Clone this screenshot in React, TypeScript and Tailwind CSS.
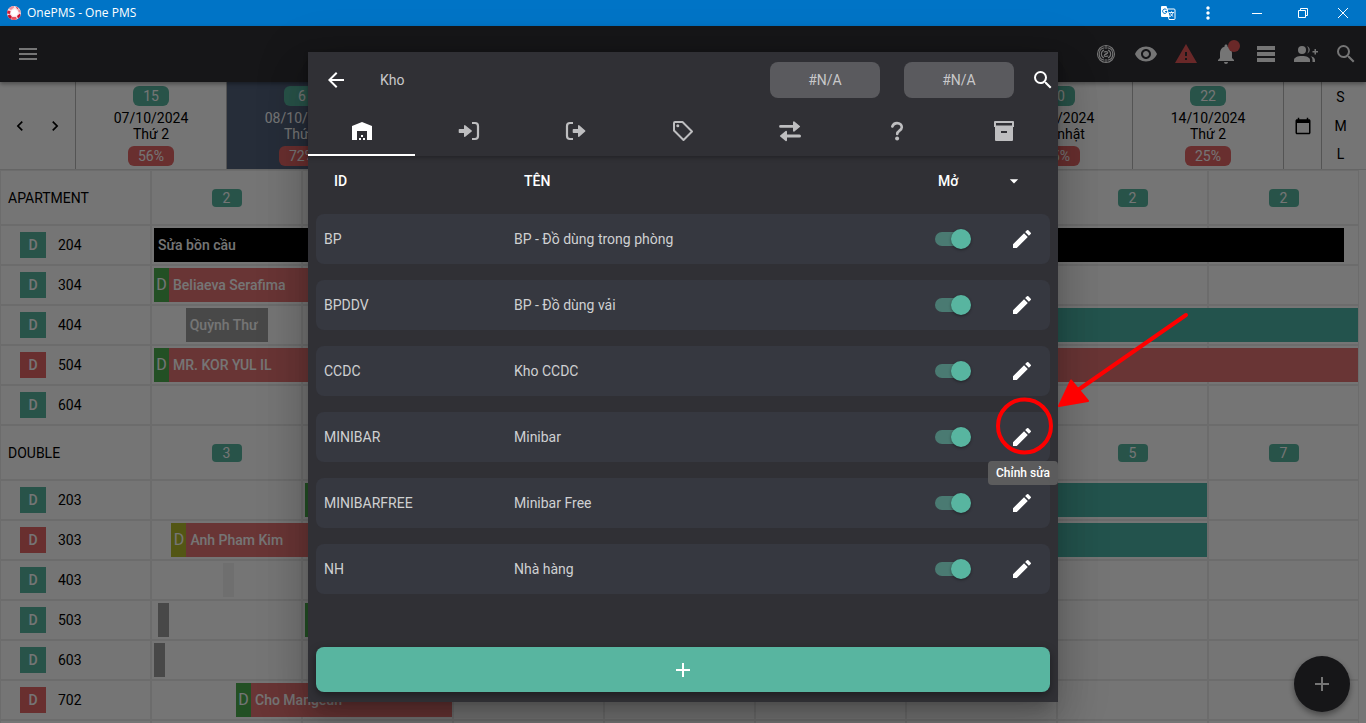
import { useState } from 'react';
import type { ReactNode } from 'react';
import {
  MdAdd,
  MdArrowBack,
  MdArrowDropDown,
  MdCalendarToday,
  MdChevronLeft,
  MdChevronRight,
  MdEdit,
  MdMenu,
  MdMoreVert,
  MdNotifications,
  MdSearch,
  MdVisibility,
  MdWarning,
  MdWarehouse,
} from 'react-icons/md';

type BarTone = 'black' | 'red' | 'grey' | 'teal' | 'faint';

interface Bar {
  // both in days from the first visible day
  start: number;
  end: number;
  tone: BarTone;
  label?: string;
  flag?: 'green' | 'olive';
}

interface Room {
  name: string;
  clean: boolean;
  bars: Bar[];
}

interface RoomGroup {
  name: string;
  free: number[];
  rooms: Room[];
}

const DAYS = [
  { free: 15, date: '07/10/2024', name: 'Thứ 2', load: '56%' },
  { free: 6, date: '08/10/2024', name: 'Thứ 3', load: '72%', today: true },
  { free: 8, date: '09/10/2024', name: 'Thứ 4', load: '68%' },
  { free: 9, date: '10/10/2024', name: 'Thứ 5', load: '64%' },
  { free: 9, date: '11/10/2024', name: 'Thứ 6', load: '60%' },
  { free: 10, date: '12/10/2024', name: 'Thứ 7', load: '55%' },
  { free: 20, date: '13/10/2024', name: 'Chủ nhật', load: '35%' },
  { free: 22, date: '14/10/2024', name: 'Thứ 2', load: '25%' },
];

const GROUPS: RoomGroup[] = [
  {
    name: 'APARTMENT',
    free: [2, 2, 2, 2, 2, 2, 2, 2],
    rooms: [
      { name: '204', clean: true, bars: [{ start: 0.02, end: 7.9, tone: 'black', label: 'Sửa bồn cầu' }] },
      { name: '304', clean: true, bars: [{ start: 0.02, end: 4, tone: 'red', label: 'Beliaeva Serafima', flag: 'green' }] },
      {
        name: '404',
        clean: true,
        bars: [
          { start: 0.23, end: 0.775, tone: 'grey', label: 'Quỳnh Thư' },
          { start: 4, end: 7.995, tone: 'teal' },
        ],
      },
      { name: '504', clean: false, bars: [{ start: 0.02, end: 7.995, tone: 'red', label: 'MR. KOR YUL IL', flag: 'green' }] },
      { name: '604', clean: true, bars: [] },
    ],
  },
  {
    name: 'DOUBLE',
    free: [3, 3, 3, 4, 4, 4, 5, 7],
    rooms: [
      {
        name: '203',
        clean: true,
        bars: [
          { start: 1.02, end: 3, tone: 'red', flag: 'green' },
          { start: 4, end: 6.995, tone: 'teal' },
        ],
      },
      {
        name: '303',
        clean: false,
        bars: [
          { start: 0.135, end: 2, tone: 'red', label: 'Anh Pham Kim', flag: 'olive' },
          { start: 4, end: 6.995, tone: 'teal' },
        ],
      },
      { name: '403', clean: true, bars: [{ start: 0.48, end: 0.55, tone: 'faint' }] },
      {
        name: '503',
        clean: true,
        bars: [
          { start: 0.045, end: 0.12, tone: 'grey' },
          { start: 1.02, end: 3, tone: 'red', flag: 'green' },
        ],
      },
      { name: '603', clean: true, bars: [{ start: 0.02, end: 0.095, tone: 'grey' }] },
      { name: '702', clean: false, bars: [{ start: 0.563, end: 1.993, tone: 'red', label: 'Cho Mangeun', flag: 'green' }] },
      { name: '703', clean: true, bars: [] },
    ],
  },
];

const STORES = [
  { id: 'BP', name: 'BP - Đồ dùng trong phòng' },
  { id: 'BPDDV', name: 'BP - Đồ dùng vải' },
  { id: 'CCDC', name: 'Kho CCDC' },
  { id: 'MINIBAR', name: 'Minibar' },
  { id: 'MINIBARFREE', name: 'Minibar Free' },
  { id: 'NH', name: 'Nhà hàng' },
];

const BAR_TONES: Record<BarTone, string> = {
  black: 'bg-black',
  red: 'bg-[#e57373]',
  grey: 'bg-[#9e9e9e]',
  teal: 'bg-[#4db6a8]',
  faint: 'bg-[#f2f2f2]',
};

function AppLogo() {
  return (
    <svg viewBox="0 0 16 16" className="size-4">
      <circle cx="8" cy="8" r="7" fill="#fbdfe2" />
      <path d="M8 1a7 7 0 0 0-5.5 2.7L5 5l3-2.500z" fill="#ee8f9a" />
      <path d="M1.500 5.500 4.500 6 4 9l-3-.5z" fill="#d6213a" />
      <path d="M1.500 10.500 4 9.500 6 12l-1.500 2A7 7 0 0 1 1.500 10.500z" fill="#c8102e" />
      <path d="M6 12h4l1 2.300a7 7 0 0 1-6 0z" fill="#e8505f" />
      <path d="M11 11l3-2.500.5 2a7 7 0 0 1-2.500 3z" fill="#c8102e" />
      <path d="M12 4l2 1 .8 3L12.500 7z" fill="#f08a95" />
      <path d="M5.500 5.500 9 4l3 2.500L11 10.500 7 11 4.800 8.500z" fill="#fff" />
      <path d="M9.500 1.500 12.500 3 11.500 4.500z" fill="#dd3a4c" />
    </svg>
  );
}

function TranslateIcon() {
  return (
    <svg viewBox="0 0 16 16" className="size-4">
      <path d="M7 4h7a1 1 0 0 1 1 1v8.500a1 1 0 0 1-1 1H9z" fill="#0072c6" stroke="#fff" />
      <path d="M9 7.500h5M11.500 6.300v1.200M13 7.500c-.5 2-1.700 3.300-3 4.200M10.500 8.500c.6 1.300 1.500 2.200 2.700 3" fill="none" stroke="#fff" strokeWidth=".9" />
      <path d="M2 1h4.500L10 12H2a1 1 0 0 1-1-1V2a1 1 0 0 1 1-1z" fill="#fff" />
      <path d="M6.600 4.900A2.200 2.200 0 1 0 7 6.500H5" fill="none" stroke="#0072c6" />
    </svg>
  );
}

function RadarIcon() {
  return (
    <svg viewBox="0 0 20 20" className="size-5" fill="none" stroke="currentColor" strokeWidth="1.100">
      <circle cx="10" cy="10" r="8.500" />
      <path d="M8.500 3.700a6.400 6.400 0 0 0 0 12.600M11.500 3.700a6.400 6.400 0 0 1 0 12.600" />
      <path d="M8 5.900a4.500 4.500 0 0 0 0 8.200M12 5.900a4.500 4.500 0 0 1 0 8.200M10 1.500v3.500M10 15v3.500" />
      <path d="M8.200 8.500c0-1.400 3.600-1.400 3.600.2 0 1.500-3.600 1-3.600 2.700 0 1.500 3.600 1.500 3.600 0M10 8.500v3" />
    </svg>
  );
}

function RowsIcon() {
  return (
    <svg viewBox="0 0 24 24" className="size-6" fill="currentColor">
      <path d="M3 4h18v4H3zM3 10h18v4H3zM3 16h18v4H3z" />
    </svg>
  );
}

function AddPeopleIcon() {
  return (
    <svg viewBox="0 0 24 24" className="size-6" fill="currentColor">
      <path d="M19 17v2H1v-2s0-4 7-4 7 4 7 4v2H1v-2M12 8a4 4 0 1 0-8 0 4 4 0 0 0 8 0" className="hidden" />
      <path d="M24 9h-2V7h-1.500v2h-2v1.500h2v2H22v-2h2z" />
      <circle cx="8" cy="8" r="4" />
      <path d="M0 20v-2c0-2.500 3.500-4 8-4s8 1.500 8 4v2z" />
      <path d="M13 4.200a4 4 0 0 1 0 7.600c2-2.200 2-5.400 0-7.600zM16.500 14.200c1.500.9 2 2.200 2 3.800v2h2.500v-2c0-2-1.800-3.200-4.500-3.800z" />
    </svg>
  );
}

function SignInIcon({ out }: { out?: boolean }) {
  return (
    <svg viewBox="0 0 24 24" className="size-6" fill="none" stroke="currentColor">
      {out ? (
        <>
          <path d="M9 4H6a3 3 0 0 0-3 3v10a3 3 0 0 0 3 3h3" strokeWidth="2.200" />
          <path d="M9.500 10H14V6.800a.7.700 0 0 1 1.200-.5l6 5.200a.7.700 0 0 1 0 1l-6 5.200a.7.700 0 0 1-1.200-.5V14H9.500a.8.800 0 0 1-.8-.8v-2.400a.8.800 0 0 1 .8-.8z" fill="currentColor" stroke="none" />
        </>
      ) : (
        <>
          <path d="M15 4h3a3 3 0 0 1 3 3v10a3 3 0 0 1-3 3h-3" strokeWidth="2.200" />
          <path d="M2.500 10H7V6.800a.7.700 0 0 1 1.200-.5l6.500 5.200a.7.700 0 0 1 0 1l-6.500 5.200a.7.700 0 0 1-1.200-.5V14H2.500a.8.800 0 0 1-.8-.8v-2.400a.8.800 0 0 1 .8-.8z" fill="currentColor" stroke="none" />
        </>
      )}
    </svg>
  );
}

function TagIcon() {
  return (
    <svg viewBox="0 0 24 24" className="size-6" fill="none" stroke="currentColor" strokeWidth="2">
      <path d="M3 4v7.500l9.500 9.500 8.500-8.500L11.500 3H4a1 1 0 0 0-1 1z" strokeLinejoin="round" />
      <circle cx="6.800" cy="6.800" r="1.500" fill="currentColor" stroke="none" />
    </svg>
  );
}

function SwapIcon() {
  return (
    <svg viewBox="0 0 24 24" className="size-6" fill="currentColor">
      <path d="M2.500 6H15V3.200a.8.800 0 0 1 1.400-.6l5.400 4.300a.8.800 0 0 1 0 1.200l-5.400 4.300a.8.800 0 0 1-1.400-.6V8.800H2.500a1.400 1.400 0 0 1 0-2.800z" />
      <path d="M21.500 15.500H9v-2.800a.8.800 0 0 0-1.400-.6l-5.400 4.300a.8.800 0 0 0 0 1.200l5.400 4.300a.8.800 0 0 0 1.400-.6v-2.800h12.500a1.400 1.400 0 0 0 0-3z" />
    </svg>
  );
}

function QuestionIcon() {
  return (
    <svg viewBox="0 0 24 24" className="size-6" fill="none" stroke="currentColor" strokeWidth="2.600" strokeLinecap="round">
      <path d="M7.300 7.500c.8-2.300 2.500-3.400 4.700-3.400 2.800 0 4.800 1.800 4.800 4.200 0 3.400-4.600 3.300-4.600 6.700" />
      <circle cx="12.100" cy="19.500" r="2" fill="currentColor" stroke="none" />
    </svg>
  );
}

function ArchiveIcon() {
  return (
    <svg viewBox="0 0 24 24" className="size-6" fill="currentColor">
      <path fillRule="evenodd" d="M3 2h18a1 1 0 0 1 1 1v5H2V3a1 1 0 0 1 1-1zm1 2v2.500h16V4z" />
      <path fillRule="evenodd" d="M3 8h18v13a1 1 0 0 1-1 1H4a1 1 0 0 1-1-1zm6 4v2h6v-2z" />
    </svg>
  );
}

const TABS: { label: string; icon: ReactNode }[] = [
  { label: 'Kho', icon: <MdWarehouse className="size-6" /> },
  { label: 'Nhập kho', icon: <SignInIcon /> },
  { label: 'Xuất kho', icon: <SignInIcon out /> },
  { label: 'Giá', icon: <TagIcon /> },
  { label: 'Chuyển kho', icon: <SwapIcon /> },
  { label: 'Kiểm kho', icon: <QuestionIcon /> },
  { label: 'Tồn kho', icon: <ArchiveIcon /> },
];

function TitleBar() {
  return (
    <header className="flex h-[26px] shrink-0 items-center bg-[#0074c6] text-white">
      <div className="flex flex-1 items-center gap-[5px] pl-1.5">
        <AppLogo />
        <span className="font-['Open_Sans',sans-serif] text-xs">OnePMS - One PMS</span>
      </div>
      <button aria-label="Translate" className="flex w-10 justify-center"><TranslateIcon /></button>
      <button aria-label="Menu" className="flex w-10 justify-center"><MdMoreVert className="size-5" /></button>
      <button aria-label="Minimize" className="flex w-[46px] justify-center pl-3">
        <svg viewBox="0 0 10 10" className="size-2.5" stroke="currentColor"><path d="M0 5.500h10" /></svg>
      </button>
      <button aria-label="Restore" className="flex w-[46px] justify-center pl-3">
        <svg viewBox="0 0 10 10" className="size-2.5" fill="none" stroke="currentColor"><path d="M.5 2.500h7v7h-7zM2.500 2.500v-2h7v7h-2" /></svg>
      </button>
      <button aria-label="Close" className="flex w-[46px] justify-center">
        <svg viewBox="0 0 10 10" className="size-2.5" stroke="currentColor"><path d="M0 0l10 10M10 0L0 10" /></svg>
      </button>
    </header>
  );
}

function AppBar() {
  return (
    <div className="relative flex h-14 shrink-0 items-center justify-between bg-[#303036] px-4 text-white shadow-[0_2px_4px_rgba(0,0,0,0.35)]">
      <button aria-label="Menu"><MdMenu className="size-6" /></button>
      <div className="flex gap-4 pr-[-8px] -mr-2">
        <button aria-label="Radar" className="flex size-6 items-center justify-center"><RadarIcon /></button>
        <button aria-label="View"><MdVisibility className="size-6" /></button>
        <button aria-label="Warnings" className="text-[#e55757]"><MdWarning className="size-6" /></button>
        <button aria-label="Notifications" className="relative">
          <MdNotifications className="size-6" />
          <span className="absolute -top-0.5 -right-0.5 size-3 rounded-full bg-[#e55757]" />
        </button>
        <button aria-label="Rows"><RowsIcon /></button>
        <button aria-label="Guests"><AddPeopleIcon /></button>
        <button aria-label="Search"><MdSearch className="size-6" /></button>
      </div>
    </div>
  );
}

function DayHeader() {
  return (
    <div className="flex h-[88px] shrink-0 border-b border-[#dcdcdc] pr-[7px] text-sm leading-4">
      <div className="flex w-[75px] shrink-0 items-center justify-between px-2.5">
        <button aria-label="Previous"><MdChevronLeft className="size-5" /></button>
        <button aria-label="Next"><MdChevronRight className="size-5" /></button>
      </div>
      {DAYS.map((day) => (
        <div
          key={day.date}
          className={`flex flex-1 flex-col items-center border-l border-[#b8b8b8] pt-1 ${day.today ? 'bg-[#53627d] text-white' : ''}`}
        >
          <span className="w-9 rounded-md bg-[#58b5a0] text-center leading-5 text-white">{day.free}</span>
          <span className="pt-1">{day.date}</span>
          <span>{day.name}</span>
          <span className="mt-1 w-[46px] rounded-md bg-[#e56767] text-center leading-5 text-white">{day.load}</span>
        </div>
      ))}
      <button aria-label="Calendar" className="flex w-[38px] items-center justify-center border-l border-[#b8b8b8]">
        <MdCalendarToday className="size-[18px]" />
      </button>
      <div className="flex w-[38px] flex-col items-center justify-between border-l border-[#b8b8b8] py-[7px]">
        <button>S</button>
        <button>M</button>
        <button>L</button>
      </div>
    </div>
  );
}

function Booking({ bar }: { bar: Bar }) {
  return (
    <div
      className={`absolute top-[3px] flex h-[34px] items-center overflow-hidden whitespace-nowrap text-white ${BAR_TONES[bar.tone]}`}
      style={{ left: `${(bar.start / 8) * 100}%`, width: `${((bar.end - bar.start) / 8) * 100}%` }}
    >
      {bar.flag && (
        <span className={`flex h-full w-[15px] shrink-0 items-center justify-center text-base ${bar.flag === 'green' ? 'bg-[#4caf50]' : 'bg-[#b5bb2c]'}`}>
          D
        </span>
      )}
      {bar.label && <span className="pl-1 font-medium">{bar.label}</span>}
    </div>
  );
}

function Timeline() {
  return (
    <div className="flex-1 overflow-hidden pr-[7px] text-sm">
      {GROUPS.map((group) => (
        <div key={group.name}>
          <div className="grid h-[55px] grid-cols-9">
            <div className="flex items-center border border-[#ececec] pl-[7px]">{group.name}</div>
            {group.free.map((count, i) => (
              <div key={i} className="flex items-center justify-center border border-[#ececec]">
                <span className="w-[30px] rounded bg-[#58b5a0] text-center leading-[18px] text-white">{count}</span>
              </div>
            ))}
          </div>
          {group.rooms.map((room) => (
            <div key={room.name} className="grid h-10 grid-cols-9">
              <div className="flex items-center gap-3 border border-[#ececec] pl-[19px]">
                <span className={`w-[26px] text-center leading-[26px] font-medium text-white ${room.clean ? 'bg-[#58b5a0]' : 'bg-[#e56767]'}`}>D</span>
                {room.name}
              </div>
              <div className="relative col-span-8 grid grid-cols-8">
                {DAYS.map((day) => (
                  <div key={day.date} className="border border-[#ececec]" />
                ))}
                {room.bars.map((bar) => (
                  <Booking key={bar.start} bar={bar} />
                ))}
              </div>
            </div>
          ))}
        </div>
      ))}
    </div>
  );
}

function Toggle({ label, checked, onChange }: { label: string; checked: boolean; onChange: () => void }) {
  return (
    <label className="relative flex h-5 w-9 cursor-pointer items-center">
      <input type="checkbox" aria-label={label} checked={checked} onChange={onChange} className="peer sr-only" />
      <span className="h-3.5 w-[34px] rounded-full bg-white/30 peer-checked:bg-[#4a7a72]" />
      <span className="absolute left-0 size-5 rounded-full bg-gray-300 shadow-[0_1px_3px_rgba(0,0,0,0.4)] peer-checked:left-4 peer-checked:bg-[#58b5a0]" />
    </label>
  );
}

function StoreDialog() {
  const [tab, setTab] = useState(0);
  const [closed, setClosed] = useState<string[]>([]);

  const toggle = (id: string) =>
    setClosed((prev) => (prev.includes(id) ? prev.filter((x) => x !== id) : [...prev, id]));

  return (
    <div
      role="dialog"
      aria-label="Kho"
      className="relative flex w-full max-w-[750px] flex-col bg-[#303035] text-sm text-white shadow-[0_11px_15px_-7px_rgba(0,0,0,0.2),0_24px_38px_3px_rgba(0,0,0,0.14),0_9px_46px_8px_rgba(0,0,0,0.12)]"
    >
      <div className="shadow-[0_2px_4px_rgba(0,0,0,0.25)]">
        <div className="flex h-14 items-center pl-4 text-[#c8c8ca]">
          <button aria-label="Quay lại" className="text-white"><MdArrowBack className="size-6" /></button>
          <h1 className="flex-1 pl-8">Kho</h1>
          <button className="h-9 w-[110px] rounded-lg bg-[#5a5a5e]">#N/A</button>
          <button className="ml-6 h-9 w-[110px] rounded-lg bg-[#5a5a5e]">#N/A</button>
          <button aria-label="Tìm kiếm" className="pr-[3px] pl-[17px] text-white"><MdSearch className="size-6" /></button>
        </div>
        <div role="tablist" className="grid h-12 grid-cols-7">
          {TABS.map((item, i) => (
            <button
              key={item.label}
              role="tab"
              aria-label={item.label}
              aria-selected={tab === i}
              onClick={() => setTab(i)}
              className={`flex items-center justify-center border-b-2 ${tab === i ? 'border-white text-white' : 'border-transparent text-[#bebec0]'}`}
            >
              {item.icon}
            </button>
          ))}
        </div>
      </div>

      <table className="mx-2 block">
        <thead className="block">
          <tr className="flex h-[50px] items-center px-[18px] text-left">
            <th className="w-[190px] font-medium">ID</th>
            <th className="flex-1 font-medium">TÊN</th>
            <th className="flex w-[94px] items-center justify-between pr-2 font-medium">
              Mở
              <button aria-label="Lọc"><MdArrowDropDown className="size-5" /></button>
            </th>
          </tr>
        </thead>
        <tbody className="flex flex-col gap-4 pt-2">
          {STORES.map((store) => (
            <tr key={store.id} className="flex h-[50px] items-center rounded-lg bg-[#363840] pr-4 pl-2 text-[#cfd0d2]">
              <td className="w-[190px]">{store.id}</td>
              <td className="flex-1">{store.name}</td>
              <td className="w-[75px]">
                <Toggle label={store.name} checked={!closed.includes(store.id)} onChange={() => toggle(store.id)} />
              </td>
              <td className="relative">
                <button aria-label={`Chỉnh sửa ${store.id}`} className="block text-white"><MdEdit className="size-6" /></button>
                {store.id === 'MINIBAR' && (
                  <>
                    <span className="absolute top-9 -right-6 z-10 rounded bg-[#616161]/90 px-2 text-xs leading-6 font-medium whitespace-nowrap text-white">
                      Chỉnh sửa
                    </span>
                    <svg viewBox="0 0 200 150" className="pointer-events-none absolute -top-[118px] -left-[20px] z-20 h-[150px] w-[200px] max-w-none">
                      <circle cx="34.500" cy="119" r="26.500" fill="none" stroke="#f00" strokeWidth="4" />
                      <path d="M196 8 88 83" stroke="#f00" strokeWidth="4" strokeLinecap="round" />
                      <path d="M69 99 81 73.500 98 94z" fill="#f00" stroke="#f00" strokeWidth="2" strokeLinejoin="round" />
                    </svg>
                  </>
                )}
              </td>
            </tr>
          ))}
        </tbody>
      </table>

      <button
        aria-label="Thêm kho"
        className="mx-2 mt-auto mb-2.5 flex h-[45px] items-center justify-center rounded-lg bg-[#58b5a0] shadow-[0_3px_8px_rgba(0,0,0,0.4)]"
      >
        <MdAdd className="size-6" />
      </button>
    </div>
  );
}

export default function App() {
  return (
    <div className="flex h-screen flex-col overflow-hidden bg-white font-[Roboto,sans-serif] text-black">
      <TitleBar />
      <main className="relative flex min-h-0 flex-1 flex-col">
        <AppBar />
        <DayHeader />
        <Timeline />
        <button
          aria-label="Thêm"
          className="absolute right-4 bottom-[11px] flex size-14 items-center justify-center rounded-full bg-[#303036] text-white shadow-[0_3px_6px_rgba(0,0,0,0.4)]"
        >
          <MdAdd className="size-6" />
        </button>

        {/* Dialog over the dimmed planner */}
        <div className="absolute inset-0 flex justify-center bg-black/54 pt-[26px] pb-[21px]">
          <StoreDialog />
        </div>
      </main>
    </div>
  );
}
